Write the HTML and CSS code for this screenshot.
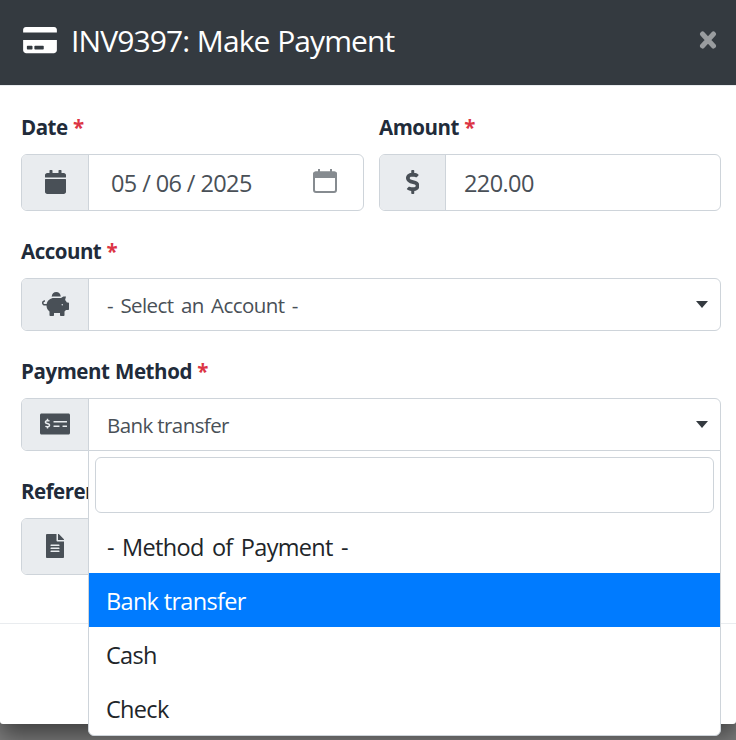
FILE: index.html
```
<!DOCTYPE html>
<html lang="en">
<head>
<meta charset="utf-8">
<title>Make Payment</title>
<link rel="stylesheet" href="styles.css">
</head>
<body>
<div class="modal">
  <header class="modal-header">
    <svg class="title-icon" viewBox="0 0 576 512"><path d="M0 432c0 26.5 21.5 48 48 48h480c26.5 0 48-21.5 48-48V256H0v176zm192-68c0-6.6 5.4-12 12-12h136c6.6 0 12 5.4 12 12v40c0 6.600-5.400 12-12 12H204c-6.600 0-12-5.400-12-12v-40zm-128 0c0-6.600 5.400-12 12-12h72c6.600 0 12 5.400 12 12v40c0 6.600-5.400 12-12 12H76c-6.600 0-12-5.400-12-12v-40zM576 80v48H0V80c0-26.500 21.500-48 48-48h480c26.500 0 48 21.500 48 48z"/></svg>
    <h1 class="modal-title">INV9397: Make Payment</h1>
    <svg class="close" viewBox="0 0 18 20"><path d="M3.500 4l11 12M14.500 4l-11 12"/></svg>
  </header>
  <main class="modal-body">
    <div class="row">
      <div class="field">
        <label class="label">Date <span class="required">*</span></label>
        <div class="group">
          <div class="addon"><svg class="icon" viewBox="0 0 448 512"><path d="M12 192h424c6.600 0 12 5.400 12 12v260c0 26.500-21.500 48-48 48H48c-26.500 0-48-21.500-48-48V204c0-6.600 5.400-12 12-12zm436-44v-36c0-26.500-21.500-48-48-48h-48V12c0-6.600-5.400-12-12-12h-40c-6.600 0-12 5.400-12 12v52H160V12c0-6.600-5.400-12-12-12h-40c-6.600 0-12 5.400-12 12v52H48C21.500 64 0 85.500 0 112v36c0 6.600 5.400 12 12 12h424c6.600 0 12-5.400 12-12z"/></svg></div>
          <div class="control date">
            <div class="date-parts"><span>05</span><span class="slash">/</span><span>06</span><span class="slash">/</span><span>2025</span></div>
            <svg class="picker" viewBox="0 0 24 24"><path class="picker-frame" d="M1 5.500a2 2 0 0 1 2-2h18a2 2 0 0 1 2 2V21a2 2 0 0 1-2 2H3a2 2 0 0 1-2-2z"/><path d="M0 9V5a2.500 2.500 0 0 1 2.500-2.500H5V0h2v2.500h10V0h2v2.500h2.500A2.500 2.500 0 0 1 24 5v4z"/></svg>
          </div>
        </div>
      </div>
      <div class="field">
        <label class="label">Amount <span class="required">*</span></label>
        <div class="group">
          <div class="addon addon-narrow"><svg class="icon" viewBox="0 0 288 512"><path d="M209.200 233.400l-108-31.600C88.700 198.200 80 186.500 80 173.500c0-16.300 13.200-29.500 29.500-29.500h66.300c12.200 0 24.200 3.700 34.200 10.500 6.100 4.100 14.300 3.100 19.500-2l34.800-34c7.100-6.900 6.100-18.400-1.800-24.500C238 74.800 207.400 64.100 176 64V16c0-8.800-7.200-16-16-16h-32c-8.800 0-16 7.200-16 16v48h-2.500C45.800 64-5.400 118.700.5 183.600c4.200 46.100 39.400 83.600 83.800 96.600l102.500 30c12.500 3.700 21.200 15.300 21.200 28.300 0 16.300-13.200 29.500-29.500 29.500h-66.300C100 368 88 364.300 78 357.500c-6.100-4.100-14.300-3.100-19.500 2l-34.800 34c-7.100 6.900-6.100 18.400 1.800 24.500 24.500 19.200 55.100 29.900 86.500 30v48c0 8.800 7.200 16 16 16h32c8.800 0 16-7.200 16-16v-48.200c46.600-.9 90.300-28.600 105.700-72.700 21.500-61.600-14.600-124.800-72.500-141.700z"/></svg></div>
          <div class="control">220.00</div>
        </div>
      </div>
    </div>
    <div class="field">
      <label class="label">Account <span class="required">*</span></label>
      <div class="group select">
        <div class="addon"><svg class="icon" viewBox="0 0 576 512"><path d="M560 224h-29.500c-8.800-20-21.600-37.700-37.400-52.500L512 96h-32c-29.400 0-55.400 13.500-73 34.300-7.600-1.100-15.100-2.300-23-2.300H256c-77.400 0-141.900 55-156.800 128H56c-14.800 0-26.500-13.500-23.500-28.800C34.700 215.800 45.400 208 57 208h1c3.300 0 6-2.700 6-6v-20c0-3.300-2.700-6-6-6-28.500 0-53.900 20.400-57.500 48.600C-3.900 258.800 22.700 288 56 288h40c0 52.200 25.400 98.100 64 127.300V496c0 8.800 7.200 16 16 16h64c8.800 0 16-7.200 16-16v-48h128v48c0 8.800 7.200 16 16 16h64c8.800 0 16-7.200 16-16v-80.700c11.800-8.900 22.300-19.400 31.300-31.300H560c8.800 0 16-7.200 16-16V240c0-8.800-7.200-16-16-16zm-128 64c-8.800 0-16-7.200-16-16s7.200-16 16-16 16 7.200 16 16-7.200 16-16 16zM256 96h128c5.400 0 10.700.4 15.900.8 0-.3.1-.5.1-.8 0-53-43-96-96-96s-96 43-96 96c0 2.100.5 4.100.6 6.200 15.200-3.900 31-6.200 47.400-6.200z"/></svg></div>
        <div class="control"><span class="dashed">- Select an Account -</span><i class="caret"></i></div>
      </div>
    </div>
    <div class="field">
      <label class="label method-label">Payment Method <span class="required">*</span></label>
      <div class="group select open">
        <div class="addon"><svg class="icon" viewBox="0 0 640 512"><path d="M608 32H32C14.330 32 0 46.330 0 64v384c0 17.670 14.330 32 32 32h576c17.670 0 32-14.330 32-32V64c0-17.670-14.330-32-32-32zM176 327.880V344c0 4.420-3.580 8-8 8h-16c-4.420 0-8-3.580-8-8v-16.290c-11.290-.58-22.270-4.520-31.370-11.350-3.900-2.930-4.100-8.770-.57-12.140l11.750-11.210c2.770-2.640 6.890-2.760 10.130-.73 3.870 2.420 8.260 3.720 12.820 3.720h28.110c6.500 0 11.800-5.920 11.800-13.190 0-5.950-3.610-11.190-8.770-12.730l-45-13.500c-18.590-5.580-31.580-23.420-31.580-43.390 0-24.520 19.050-44.440 42.670-45.070V152c0-4.420 3.580-8 8-8h16c4.420 0 8 3.580 8 8v16.290c11.290.58 22.270 4.510 31.370 11.350 3.900 2.930 4.100 8.770.57 12.140l-11.750 11.210c-2.770 2.640-6.890 2.760-10.130.73-3.870-2.430-8.260-3.720-12.820-3.720h-28.110c-6.500 0-11.800 5.920-11.800 13.190 0 5.950 3.610 11.190 8.770 12.730l45 13.500c18.590 5.580 31.580 23.420 31.580 43.390 0 24.530-19.050 44.440-42.670 45.070zM416 312c0 4.420-3.580 8-8 8H296c-4.420 0-8-3.580-8-8v-16c0-4.420 3.580-8 8-8h112c4.420 0 8 3.580 8 8v16zm160 0c0 4.420-3.580 8-8 8h-80c-4.420 0-8-3.580-8-8v-16c0-4.420 3.580-8 8-8h80c4.420 0 8 3.580 8 8v16zm0-96c0 4.420-3.580 8-8 8H296c-4.420 0-8-3.580-8-8v-16c0-4.420 3.580-8 8-8h272c4.420 0 8 3.580 8 8v16z"/></svg></div>
        <div class="control"><span>Bank transfer</span><i class="caret"></i></div>
        <div class="dropdown">
          <div class="search"></div>
          <ul class="options">
            <li class="option dashed">- Method of Payment -</li>
            <li class="option selected">Bank transfer</li>
            <li class="option">Cash</li>
            <li class="option">Check</li>
          </ul>
        </div>
      </div>
    </div>
    <div class="field">
      <label class="label">Reference</label>
      <div class="group">
        <div class="addon"><svg class="icon" viewBox="0 0 384 512"><path d="M224 136V0H24C10.700 0 0 10.700 0 24v464c0 13.300 10.700 24 24 24h336c13.300 0 24-10.700 24-24V160H248c-13.200 0-24-10.800-24-24zm64 236c0 6.600-5.400 12-12 12H108c-6.600 0-12-5.400-12-12v-8c0-6.600 5.400-12 12-12h168c6.600 0 12 5.400 12 12v8zm0-64c0 6.600-5.400 12-12 12H108c-6.600 0-12-5.400-12-12v-8c0-6.600 5.400-12 12-12h168c6.600 0 12 5.400 12 12v8zm0-72v8c0 6.600-5.400 12-12 12H108c-6.600 0-12-5.400-12-12v-8c0-6.600 5.400-12 12-12h168c6.600 0 12 5.400 12 12zm96-114.100v6.100H256V0h6.100c6.400 0 12.500 2.500 17 7l97.900 98c4.500 4.500 7 10.600 7 16.900z"/></svg></div>
        <div class="control"></div>
      </div>
    </div>
  </main>
  <footer class="modal-footer"></footer>
</div>
</body>
</html>
```
FILE: styles.css
```
* {
  box-sizing: border-box;
}

body {
  margin: 0;
  height: 740px;
  overflow: hidden;
  background: #7f7f7f;
  font-family: "Open Sans", "Noto Sans", sans-serif;
  color: #495057;
}

.modal {
  height: 724px;
  background: #fff;
  border-radius: 0 0 3px 3px;
  box-shadow: 0 12px 24px rgba(0, 0, 0, 0.5);
  display: flex;
  flex-direction: column;
}

.modal-header {
  height: 86px;
  padding: 0 19px 5px 23px;
  display: flex;
  align-items: center;
  background: #343a40;
  border-bottom: 1px solid #e9ecef;
  color: #fff;
}

.title-icon {
  width: 34px;
  height: 30px;
  margin-top: -1px;
  fill: #fff;
}

.modal-title {
  margin: 1px auto 0 14px;
  font-size: 30px;
  font-weight: 400;
  line-height: 44px;
  letter-spacing: -0.9px;
  word-spacing: 0.8px;
}

.close {
  width: 18px;
  height: 20px;
  margin-top: -1px;
  fill: none;
  stroke: #999c9f;
  stroke-width: 5;
  stroke-linecap: round;
}

.modal-body {
  flex: 1;
  padding: 26px 15px 0 21px;
  display: flex;
  flex-direction: column;
  gap: 25px;
}

.row {
  display: grid;
  grid-template-columns: 343px 342px;
  gap: 15px;
}

.label {
  display: block;
  height: 30px;
  margin-bottom: 12px;
  font-size: 20.5px;
  font-weight: 700;
  line-height: 30px;
  letter-spacing: -0.5px;
  word-spacing: 0.5px;
  color: #212b3a;
}

.method-label {
  letter-spacing: -0.42px;
}

.required {
  color: #dc3545;
}

.group {
  position: relative;
  display: flex;
  height: 57px;
  border: 1px solid #ced4da;
  border-radius: 6px;
  background: #fff;
}

.group.select {
  height: 53px;
}

.group.open {
  border-bottom-right-radius: 0;
}

.addon {
  width: 67px;
  padding-bottom: 1px;
  display: flex;
  align-items: center;
  justify-content: center;
  background: #e9ecef;
  border-right: 1px solid #ced4da;
  border-radius: 5px 0 0 5px;
}

.addon-narrow {
  width: 66px;
}

.icon {
  height: 24px;
  fill: #495057;
}

.control {
  flex: 1;
  padding: 0 12px 0 18px;
  display: flex;
  align-items: center;
  font-size: 23.5px;
  letter-spacing: -0.6px;
}

.date {
  padding: 0 26px 0 22px;
  justify-content: space-between;
}

.date-parts {
  display: flex;
}

.slash {
  width: 19px;
  text-align: center;
}

.picker {
  width: 24px;
  height: 24px;
  margin-top: -3px;
  fill: #868b90;
}

.picker-frame {
  fill: none;
  stroke: #868b90;
  stroke-width: 2;
}

.select .control {
  justify-content: space-between;
  font-size: 20.5px;
  letter-spacing: -0.59px;
}

.control .dashed {
  word-spacing: 2.7px;
}

.option.dashed {
  padding-left: 18px;
  word-spacing: 2.8px;
}

.caret {
  border: 6px solid transparent;
  border-top: 7px solid #343a40;
  border-bottom: 0;
  margin-top: -1px;
}

.dropdown {
  position: absolute;
  z-index: 2;
  top: 51px;
  left: 66px;
  right: -1px;
  height: 286px;
  padding-top: 6px;
  background: #fff;
  border: 1px solid #ced4da;
  border-radius: 0 0 6px 6px;
}

.search {
  height: 56px;
  margin: 0 6px 6px;
  border: 1px solid #ced4da;
  border-radius: 6px;
}

.options {
  margin: 0;
  padding: 0;
  list-style: none;
}

.option {
  height: 54px;
  padding: 3px 17px 0;
  font-size: 23.5px;
  line-height: 51px;
  letter-spacing: -0.68px;
  color: #212529;
}

.option.selected {
  background: #007bff;
  color: #fff;
}

.modal-footer {
  height: 101px;
  border-top: 1px solid #e9ecef;
}
```
